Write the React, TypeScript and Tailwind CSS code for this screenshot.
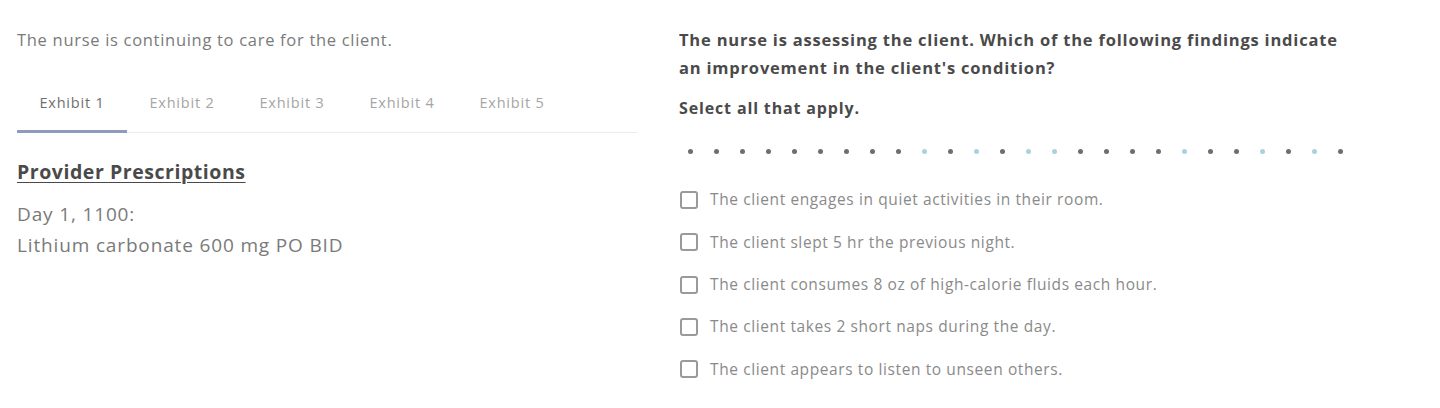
import { useState } from "react";

const tabs = ["Exhibit 1", "Exhibit 2", "Exhibit 3", "Exhibit 4", "Exhibit 5"];

// true = answered (gray), false = unanswered (light blue)
const progress = [
  true, true, true, true, true, true, true, true, true, false, true, false, true,
  false, false, true, true, true, true, false, true, true, false, true, false, true,
];

const options = [
  "The client engages in quiet activities in their room.",
  "The client slept 5 hr the previous night.",
  "The client consumes 8 oz of high-calorie fluids each hour.",
  "The client takes 2 short naps during the day.",
  "The client appears to listen to unseen others.",
];

export default function App() {
  const [active, setActive] = useState(0);
  const [checked, setChecked] = useState<boolean[]>(options.map(() => false));

  return (
    <div className="flex h-[408px] w-[1440px] bg-white pl-[17px] pt-[26px] font-['Open_Sans',sans-serif]">
      <div className="w-[620px]">
        <p className="mt-[3px] text-[16.5px] leading-[22px] tracking-[0.7px] text-[#7a7a7a]">
          The nurse is continuing to care for the client.
        </p>

        <div className="mt-[42px] flex border-b border-[#ececec]">
          {tabs.map((t, i) => (
            <button
              key={t}
              onClick={() => setActive(i)}
              className={`relative flex h-[39px] w-[110px] items-start justify-center text-[14.5px] leading-[20px] tracking-[0.8px] ${
                i === active ? "text-[#6f6f6f]" : "text-[#a5a5a5]"
              }`}
            >
              {t}
              {i === active && (
                <span className="absolute bottom-[-1px] left-0 h-[3px] w-full bg-[#8d9db9]" />
              )}
            </button>
          ))}
        </div>

        <h2 className="mt-[26px] text-[19.5px] font-bold leading-[26px] tracking-[0.55px] text-[#4a4a4a] underline underline-offset-[3px]">
          Provider Prescriptions
        </h2>
        <div className="mt-[14px] text-[19px] leading-[31px] tracking-[0.85px] text-[#7a7a7a]">
          <p>Day 1, 1100:</p>
          <p>Lithium carbonate 600 mg PO BID</p>
        </div>
      </div>

      <div className="ml-[42px] w-[680px]">
        <p className="text-[16.5px] font-bold leading-[28px] tracking-[0.8px] text-[#4a4a4a]">
          The nurse is assessing the client. Which of the following findings indicate an improvement in
          the client's condition?
        </p>
        <p className="mt-[15px] text-[16px] font-bold leading-[22px] tracking-[0.85px] text-[#4a4a4a]">
          Select all that apply.
        </p>

        <div className="mt-[27px] flex h-[10px] items-center gap-[21px] pl-[9px]">
          {progress.map((done, i) => (
            <span
              key={i}
              className={`h-[5px] w-[5px] rounded-full ${done ? "bg-[#6e6e6e]" : "bg-[#a9d2de]"}`}
            />
          ))}
        </div>

        <ul className="mt-[34px] flex flex-col gap-[22.3px]">
          {options.map((o, i) => (
            <li key={o} className="flex h-[20px] items-center">
              <button
                onClick={() => setChecked((c) => c.map((v, j) => (j === i ? !v : v)))}
                className="ml-[1px] flex h-[18px] w-[18px] items-center justify-center rounded-[3px] border-2 border-[#9a9a9a]"
              >
                {checked[i] && <span className="h-[8px] w-[8px] bg-[#6e6e6e]" />}
              </button>
              <span className="ml-[12px] text-[15.5px] tracking-[0.6px] text-[#8a8a8a]">{o}</span>
            </li>
          ))}
        </ul>
      </div>
    </div>
  );
}
